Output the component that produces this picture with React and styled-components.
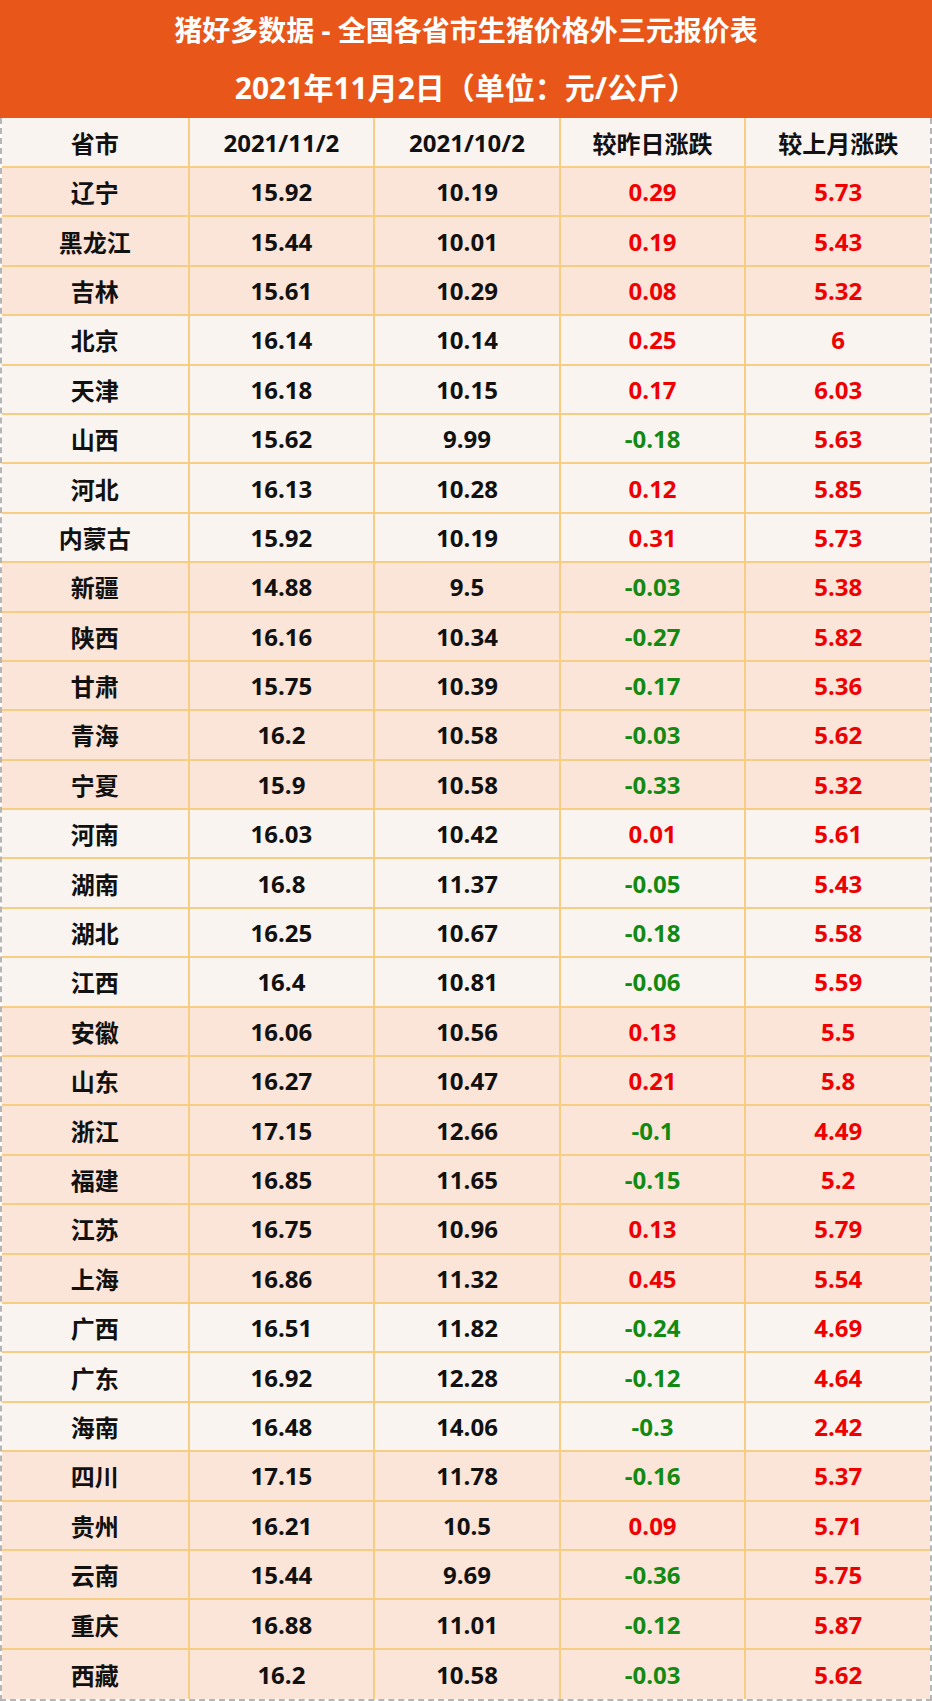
import React from 'react';
import styled, { createGlobalStyle } from 'styled-components';

const GlobalStyle = createGlobalStyle`
    body {
        margin:0;
        background:#fff;
        font-family:"Open Sans","Noto Sans CJK SC",sans-serif;
    }
`

const Page = styled.div`
    width:932px;
    display:flex;
    flex-direction:column;
`

const TitleBox = styled.div`
    background:#E8561A;
    height:118px;
    display:flex;
    flex-direction:column;
    justify-content:center;
    color:#fff;
    font-weight:700;
    text-align:center;
`

const TitleLine = styled.div`
    height:57px;
    line-height:57px;
    font-size:${p => p.$size}px;
`

const Sheet = styled.div`
    border-left:2px dashed #b5b5b5;
    border-right:2px dashed #b5b5b5;
    border-bottom:2px dashed #b5b5b5;
`

const Row = styled.div`
    display:grid;
    grid-template-columns:repeat(5, 1fr);
    height:${p => p.$h}px;
    background:${p => p.$bg};
    border-bottom:2px solid #F7CC83;
    box-sizing:border-box;
    &:last-child { border-bottom:none; }
`

const Cell = styled.div`
    display:flex;
    align-items:center;
    justify-content:center;
    font-weight:700;
    font-size:24px;
    color:${p => p.$color || '#111'};
    border-left:2px solid #F7CC83;
    &:first-child { border-left:none; }
`

const PEACH = '#FBE4D8'
const LIGHT = '#FAF4F0'

const rows = [
    ['辽宁', '15.92', '10.19', '0.29', '5.73'],
    ['黑龙江', '15.44', '10.01', '0.19', '5.43'],
    ['吉林', '15.61', '10.29', '0.08', '5.32'],
    ['北京', '16.14', '10.14', '0.25', '6'],
    ['天津', '16.18', '10.15', '0.17', '6.03'],
    ['山西', '15.62', '9.99', '-0.18', '5.63'],
    ['河北', '16.13', '10.28', '0.12', '5.85'],
    ['内蒙古', '15.92', '10.19', '0.31', '5.73'],
    ['新疆', '14.88', '9.5', '-0.03', '5.38'],
    ['陕西', '16.16', '10.34', '-0.27', '5.82'],
    ['甘肃', '15.75', '10.39', '-0.17', '5.36'],
    ['青海', '16.2', '10.58', '-0.03', '5.62'],
    ['宁夏', '15.9', '10.58', '-0.33', '5.32'],
    ['河南', '16.03', '10.42', '0.01', '5.61'],
    ['湖南', '16.8', '11.37', '-0.05', '5.43'],
    ['湖北', '16.25', '10.67', '-0.18', '5.58'],
    ['江西', '16.4', '10.81', '-0.06', '5.59'],
    ['安徽', '16.06', '10.56', '0.13', '5.5'],
    ['山东', '16.27', '10.47', '0.21', '5.8'],
    ['浙江', '17.15', '12.66', '-0.1', '4.49'],
    ['福建', '16.85', '11.65', '-0.15', '5.2'],
    ['江苏', '16.75', '10.96', '0.13', '5.79'],
    ['上海', '16.86', '11.32', '0.45', '5.54'],
    ['广西', '16.51', '11.82', '-0.24', '4.69'],
    ['广东', '16.92', '12.28', '-0.12', '4.64'],
    ['海南', '16.48', '14.06', '-0.3', '2.42'],
    ['四川', '17.15', '11.78', '-0.16', '5.37'],
    ['贵州', '16.21', '10.5', '0.09', '5.71'],
    ['云南', '15.44', '9.69', '-0.36', '5.75'],
    ['重庆', '16.88', '11.01', '-0.12', '5.87'],
    ['西藏', '16.2', '10.58', '-0.03', '5.62'],
]

// region groups: 东北, 华北, 西北, 华中, 华东, 华南, 西南
const groups = [3, 5, 5, 4, 6, 3, 5]

const rowBg = i => {
    let n = 0
    for (let g = 0; g < groups.length; g++) {
        n += groups[g]
        if (i < n) return g % 2 === 0 ? PEACH : LIGHT
    }
    return PEACH
}

const diffColor = v => (v.startsWith('-') ? '#128A12' : '#EE0000')

export default function App() {
    return <Page>
        <GlobalStyle />
        <TitleBox>
            <TitleLine $size={28}>猪好多数据 - 全国各省市生猪价格外三元报价表</TitleLine>
            <TitleLine $size={30}>2021年11月2日（单位：元/公斤）</TitleLine>
        </TitleBox>
        <Sheet>
            <Row $h={50} $bg={LIGHT}>
                <Cell>省市</Cell>
                <Cell>2021/11/2</Cell>
                <Cell>2021/10/2</Cell>
                <Cell>较昨日涨跌</Cell>
                <Cell>较上月涨跌</Cell>
            </Row>
            {rows.map((r, i) => (
                <Row key={r[0]} $h={49.4} $bg={rowBg(i)}>
                    <Cell>{r[0]}</Cell>
                    <Cell>{r[1]}</Cell>
                    <Cell>{r[2]}</Cell>
                    <Cell $color={diffColor(r[3])}>{r[3]}</Cell>
                    <Cell $color={diffColor(r[4])}>{r[4]}</Cell>
                </Row>
            ))}
        </Sheet>
    </Page>
}
